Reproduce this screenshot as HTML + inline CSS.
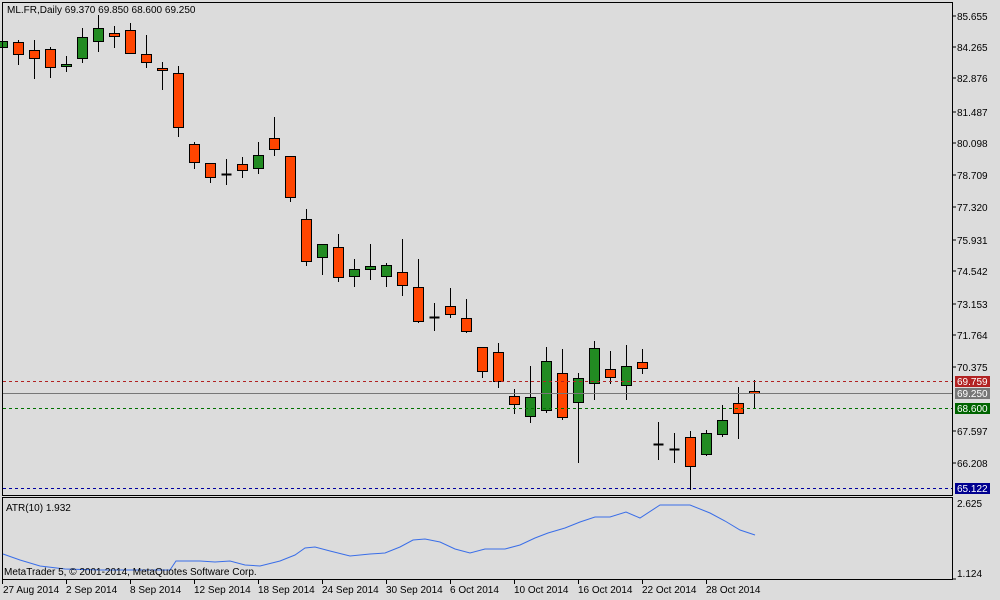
<!DOCTYPE html>
<html><head><meta charset="utf-8"><style>
html,body{margin:0;padding:0;background:#dcdcdc;}
svg{display:block;font-family:"Liberation Sans",sans-serif;font-size:10px;}
</style></head><body>
<svg id="s" width="1000" height="600" xmlns="http://www.w3.org/2000/svg">
<rect width="1000" height="600" fill="#dcdcdc"/>
<g id="cand"></g>
<line x1="3" y1="381.5" x2="952" y2="381.5" stroke="#b22222" stroke-dasharray="3,3"/>
<line x1="3" y1="393.5" x2="952" y2="393.5" stroke="#777"/>
<line x1="3" y1="408.5" x2="952" y2="408.5" stroke="#007000" stroke-dasharray="3,3"/>
<line x1="3" y1="488.5" x2="952" y2="488.5" stroke="#0000a0" stroke-dasharray="3,3"/>
<rect x="2.5" y="2.5" width="950" height="493" fill="none" stroke="#000"/>
<rect x="2.5" y="497.5" width="950" height="82" fill="none" stroke="#000"/>
<polyline fill="none" stroke="#3a6ee8" stroke-width="1" points="3,554 20,560 40,566 65,569 100,570 130,570 170,570 176,561 200,561 215,562 230,561 245,565 260,566 280,561 295,555 305,548 315,547 330,551 350,556 370,554 385,553 400,547 413,540 425,539 440,542 455,549 470,553 485,549 505,549 520,545 535,538 548,533 565,528 580,522 595,517 610,517 626,512 640,518 660,505 690,505 710,513 725,521 740,530 755,535"/>
<text x="7" y="13" fill="#000">ML.FR,Daily  69.370 69.850 68.600 69.250</text>
<text x="6" y="511" fill="#000">ATR(10) 1.932</text>
<text x="4" y="575" fill="#000">MetaTrader 5, © 2001-2014, MetaQuotes Software Corp.</text>
<g fill="#000">
<text x="957" y="20">85.655</text><text x="957" y="51">84.265</text><text x="957" y="82">82.876</text>
<text x="957" y="116">81.487</text><text x="957" y="147">80.098</text><text x="957" y="179">78.709</text>
<text x="957" y="211">77.320</text><text x="957" y="244">75.931</text><text x="957" y="275">74.542</text>
<text x="957" y="308">73.153</text><text x="957" y="339">71.764</text><text x="957" y="371">70.375</text>
<text x="957" y="435">67.597</text><text x="957" y="467">66.208</text>
<text x="957" y="507">2.625</text><text x="957" y="577">1.124</text>
</g>
<g stroke="#000">
<line x1="952" y1="16" x2="956" y2="16"/><line x1="952" y1="47" x2="956" y2="47"/><line x1="952" y1="78" x2="956" y2="78"/>
<line x1="952" y1="112" x2="956" y2="112"/><line x1="952" y1="143" x2="956" y2="143"/><line x1="952" y1="175" x2="956" y2="175"/>
<line x1="952" y1="207" x2="956" y2="207"/><line x1="952" y1="240" x2="956" y2="240"/><line x1="952" y1="271" x2="956" y2="271"/>
<line x1="952" y1="304" x2="956" y2="304"/><line x1="952" y1="335" x2="956" y2="335"/><line x1="952" y1="367" x2="956" y2="367"/>
<line x1="952" y1="431" x2="956" y2="431"/><line x1="952" y1="463" x2="956" y2="463"/>
<line x1="952" y1="579" x2="956" y2="579"/>
</g>
<rect x="955" y="376" width="35" height="11" fill="#b22222"/><text x="957" y="385" fill="#fff">69.759</text>
<rect x="955" y="388" width="35" height="11" fill="#777"/><text x="957" y="397" fill="#fff">69.250</text>
<rect x="955" y="403" width="35" height="11" fill="#006400"/><text x="957" y="412" fill="#fff">68.600</text>
<rect x="955" y="483" width="35" height="11" fill="#000090"/><text x="957" y="492" fill="#fff">65.122</text>
<g stroke="#000">
<line x1="2.5" y1="580" x2="2.5" y2="584"/><line x1="66.5" y1="580" x2="66.5" y2="584"/><line x1="130.5" y1="580" x2="130.5" y2="584"/>
<line x1="194.5" y1="580" x2="194.5" y2="584"/><line x1="258.5" y1="580" x2="258.5" y2="584"/><line x1="322.5" y1="580" x2="322.5" y2="584"/>
<line x1="386.5" y1="580" x2="386.5" y2="584"/><line x1="450.5" y1="580" x2="450.5" y2="584"/><line x1="514.5" y1="580" x2="514.5" y2="584"/>
<line x1="578.5" y1="580" x2="578.5" y2="584"/><line x1="642.5" y1="580" x2="642.5" y2="584"/><line x1="706.5" y1="580" x2="706.5" y2="584"/>
</g>
<g fill="#000">
<text x="3" y="593">27 Aug 2014</text><text x="66" y="593">2 Sep 2014</text><text x="130" y="593">8 Sep 2014</text>
<text x="194" y="593">12 Sep 2014</text><text x="258" y="593">18 Sep 2014</text><text x="322" y="593">24 Sep 2014</text>
<text x="386" y="593">30 Sep 2014</text><text x="450" y="593">6 Oct 2014</text><text x="514" y="593">10 Oct 2014</text>
<text x="578" y="593">16 Oct 2014</text><text x="642" y="593">22 Oct 2014</text><text x="706" y="593">28 Oct 2014</text>
</g>
</svg>
<script>
var d=[
['G',41,41,47,47],['R',40,42,54,65],['R',40,50,58,79],['R',47,49,67,78],['G',56,64,66,72],
['G',28,37,58,63],['G',15,28,41,52],['R',26,33,36,48],['R',23,30,53,53],['R',35,54,62,68],
['R',62,68,70,90],['R',66,73,127,137],['R',142,144,162,169],['R',163,163,177,183],['D',159,174,175,185],
['R',157,164,170,178],['G',142,155,168,174],['R',117,138,149,156],['R',156,156,197,202],['R',209,219,261,266],
['G',244,244,257,275],['R',234,247,277,282],['G',259,269,276,287],['G',244,266,269,280],['G',263,265,276,287],
['R',239,272,285,296],['R',259,287,321,323],['D',303,317,318,331],['R',288,306,314,318],['R',299,318,331,333],
['R',347,347,371,378],['R',343,352,381,388],['R',389,396,404,414],['G',366,397,416,423],['G',347,361,410,413],
['R',349,373,417,420],['G',373,378,402,463],['G',341,348,383,400],['R',351,369,377,384],['G',345,366,385,400],
['R',349,362,368,374],['D',422,444,445,460],['D',433,449,449,463],['R',431,437,466,490],['G',430,433,454,456],
['G',405,420,434,437],['R',387,403,413,439],['R',380,391,393,408]];
var h='';
d.forEach(function(c,i){var x=2.5+16*i;
h+='<line x1="'+x+'" y1="'+c[1]+'" x2="'+x+'" y2="'+c[4]+'" stroke="#000"/>';
if(c[0]=='D'){h+='<line x1="'+(x-5)+'" y1="'+(c[2]+0.5)+'" x2="'+(x+5)+'" y2="'+(c[2]+0.5)+'" stroke="#000" stroke-width="2"/>';}
else{var f=c[0]=='G'?'#228b22':'#ff4500';h+='<rect x="'+(x-5)+'" y="'+(c[2]+0.5)+'" width="10" height="'+Math.max(c[3]-c[2],1)+'" fill="'+f+'" stroke="#000"/>';}
});
document.getElementById('cand').innerHTML=h;
</script>
</body></html>
